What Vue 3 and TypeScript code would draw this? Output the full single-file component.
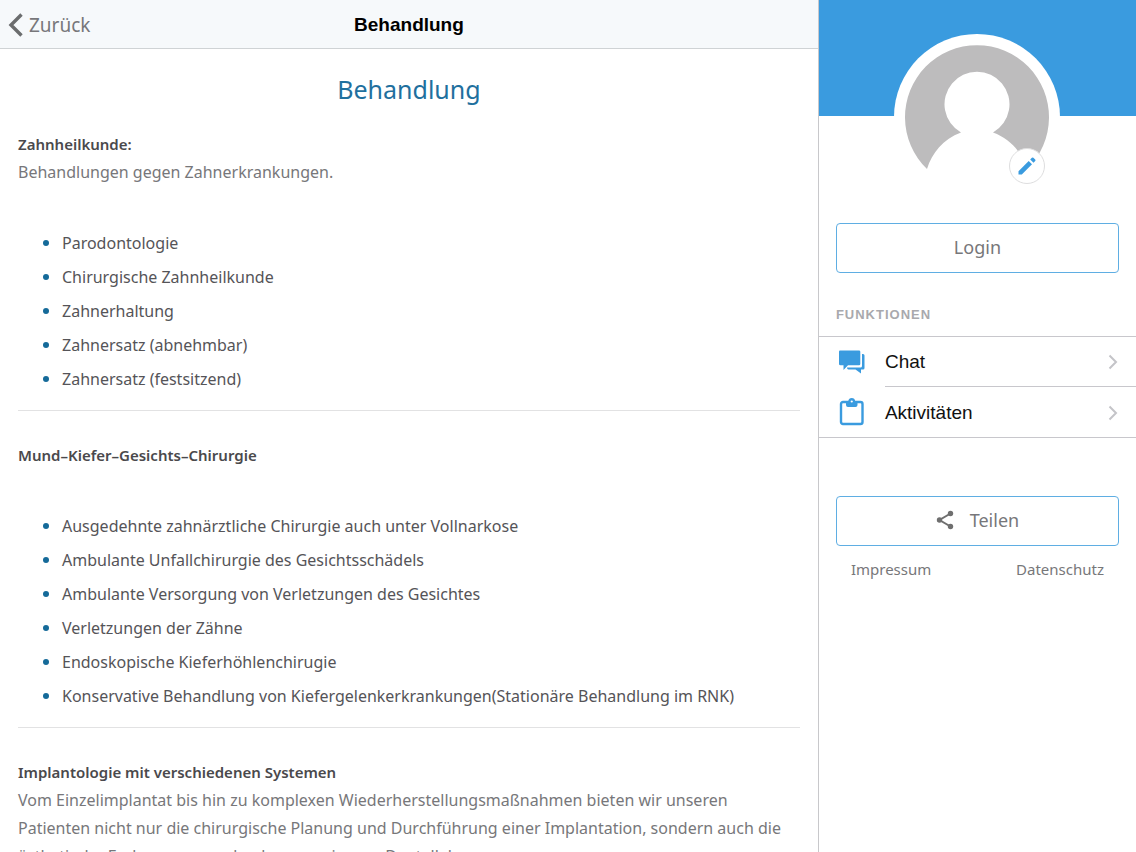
<script setup lang="ts">
interface Section {
  title: string
  text?: string
  items: string[]
}

interface MenuEntry {
  id: 'chat' | 'tasks'
  label: string
}

const sections: Section[] = [
  {
    title: 'Zahnheilkunde:',
    text: 'Behandlungen gegen Zahnerkrankungen.',
    items: [
      'Parodontologie',
      'Chirurgische Zahnheilkunde',
      'Zahnerhaltung',
      'Zahnersatz (abnehmbar)',
      'Zahnersatz (festsitzend)',
    ],
  },
  {
    title: 'Mund–Kiefer–Gesichts–Chirurgie',
    items: [
      'Ausgedehnte zahnärztliche Chirurgie auch unter Vollnarkose',
      'Ambulante Unfallchirurgie des Gesichtsschädels',
      'Ambulante Versorgung von Verletzungen des Gesichtes',
      'Verletzungen der Zähne',
      'Endoskopische Kieferhöhlenchirugie',
      'Konservative Behandlung von Kiefergelenkerkrankungen(Stationäre Behandlung im RNK)',
    ],
  },
  {
    title: 'Implantologie mit verschiedenen Systemen',
    text: 'Vom Einzelimplantat bis hin zu komplexen Wiederherstellungsmaßnahmen bieten wir unseren Patienten nicht nur die chirurgische Planung und Durchführung einer Implantation, sondern auch die ästhetische Endversorgung durch unser eigenes Dentallabor.',
    items: [],
  },
]

const menu: MenuEntry[] = [
  { id: 'chat', label: 'Chat' },
  { id: 'tasks', label: 'Aktivitäten' },
]
</script>

<template>
  <div class="app">
    <main class="content">
      <header class="bar">
        <button class="back" type="button">
          <svg width="16" height="24" viewBox="0 0 16 24" aria-hidden="true">
            <path d="M13.500 1.500 3 12l10.500 10.500" fill="none" stroke="#6b6d6e" stroke-width="3.400" />
          </svg>
          <span>Zurück</span>
        </button>
        <span class="bar-title">Behandlung</span>
      </header>

      <article class="article">
        <h1>Behandlung</h1>
        <section v-for="section in sections" :key="section.title">
          <h2>{{ section.title }}</h2>
          <p v-if="section.text">{{ section.text }}</p>
          <ul v-if="section.items.length">
            <li v-for="item in section.items" :key="item">{{ item }}</li>
          </ul>
        </section>
      </article>
    </main>

    <aside class="side">
      <div class="cover">
        <div class="avatar">
          <svg class="person" viewBox="0 0 144 144" aria-hidden="true">
            <path
              d="M22 124A72 72 0 1 1 122 124C117 108 106 94 88 87.500A32.500 32.500 0 1 0 56 87.500C38 94 27 108 22 124Z"
              fill="#bdbcbd"
            />
          </svg>
          <button class="edit" type="button" aria-label="Profilbild bearbeiten">
            <svg width="24" height="24" viewBox="0 0 24 24" aria-hidden="true">
              <path d="M3.500 17.200V20.500H6.800L17 10.300 13.700 7ZM15.200 5.500 18.500 8.800 20.200 7.100Q20.900 6.400 20.200 5.600L18.400 3.800Q17.600 3.100 16.900 3.800Z" fill="#3a9bdf" />
            </svg>
          </button>
        </div>
      </div>

      <button class="outline login" type="button">Login</button>

      <h3>FUNKTIONEN</h3>
      <nav class="menu">
        <a v-for="entry in menu" :key="entry.id" href="#">
          <svg v-if="entry.id === 'chat'" class="icon" viewBox="0 0 28 28" aria-hidden="true">
            <path d="M2 2.500H21Q22.300 2.500 22.300 3.800V16Q22.300 17.300 21 17.300H10L5.500 22V17.300H2.500Q1 17.300 1 16V3.800Q1 2.500 2 2.500Z" fill="#3a9bdf" />
            <path d="M24 6H25Q26.500 6 26.500 7.500V20Q26.500 21.500 25 21.500H23V25.500L17.500 21.500H10.500Q9 21.500 9 19.500H22.500Q24 19.500 24 18Z" fill="#3a9bdf" />
          </svg>
          <svg v-else class="icon" viewBox="0 0 28 28" aria-hidden="true">
            <rect x="3" y="4" width="21.500" height="22" rx="2" fill="none" stroke="#3a9bdf" stroke-width="2.400" />
            <path d="M8 3H10.300A3.500 3.500 0 0 1 17.200 3H19.500V7Q19.500 9 17.500 9H10Q8 9 8 7Z" fill="#3a9bdf" />
            <circle cx="13.750" cy="3.500" r="1.100" fill="#fff" />
          </svg>
          <span class="label">
            {{ entry.label }}
            <svg width="10" height="16" viewBox="0 0 10 16" aria-hidden="true">
              <path d="M1.500 1.500 8 8l-6.500 6.500" fill="none" stroke="#c4c4c8" stroke-width="2" />
            </svg>
          </span>
        </a>
      </nav>

      <button class="outline share" type="button">
        <svg width="18" height="20" viewBox="0 0 18 20" aria-hidden="true">
          <path d="M14.500 3.500 3.500 10 14.500 16.500" fill="none" stroke="#6f6f6f" stroke-width="2" />
          <circle cx="14.500" cy="3.500" r="2.700" fill="#6f6f6f" />
          <circle cx="3.500" cy="10" r="2.700" fill="#6f6f6f" />
          <circle cx="14.500" cy="16.500" r="2.700" fill="#6f6f6f" />
        </svg>
        Teilen
      </button>
      <footer class="legal">
        <a href="#">Impressum</a>
        <a href="#">Datenschutz</a>
      </footer>
    </aside>
  </div>
</template>

<style>
body {
  margin: 0;
  background: #fff;
}
</style>

<style scoped>
.app {
  display: grid;
  grid-template-columns: 18fr 7fr;
  height: 100vh;
  background: #fff;
  color: #77777a;
  font-family: "Noto Sans", "Open Sans", sans-serif;
}

button {
  margin: 0;
  padding: 0;
  font: inherit;
  color: inherit;
  cursor: pointer;
}

a {
  color: inherit;
  text-decoration: none;
}

svg {
  display: block;
  flex: none;
}

.content {
  display: flex;
  flex-direction: column;
  min-width: 0;
  min-height: 0;
}

.bar {
  display: grid;
  flex: none;
  grid-template-columns: 1fr auto 1fr;
  align-items: center;
  box-sizing: border-box;
  height: 49px;
  padding: 2px 8px 0;
  border-bottom: 1px solid #cfd3d5;
  background: #f6f9fb;
}

.back {
  display: flex;
  align-items: center;
  justify-self: start;
  gap: 5px;
  border: 0;
  background: none;
  font-size: 19px;
  line-height: 24px;
}

.bar-title {
  color: #000;
  font: bold 19px "Liberation Sans", Arial, sans-serif;
}

.article {
  flex: 1;
  min-height: 0;
  padding: 0 18px;
  overflow-y: auto;
  scrollbar-width: none;
  font-size: 16px;
  line-height: 28px;
}

h1 {
  margin: 22px 0 23px;
  color: #1f709e;
  font-size: 25px;
  font-weight: 400;
  line-height: 36px;
  text-align: center;
}

h2 {
  margin: 0;
  color: #4a494c;
  font-size: 15px;
  font-weight: 600;
  line-height: 28px;
}

p {
  margin: 0;
}

ul {
  margin: 0 0 30px;
  padding: 40px 0 14px 44px;
  border-bottom: 1px solid #e2e2e3;
  list-style: none;
  color: #555458;
}

li {
  display: flex;
  align-items: center;
  padding: 3px 0;
}

li::before {
  content: "";
  flex: none;
  width: 6px;
  height: 6px;
  margin: 0 13px 0 -19px;
  border-radius: 50%;
  background: #156a99;
}

.side {
  display: flex;
  flex-direction: column;
  min-height: 0;
  border-left: 1px solid #c8c8cb;
}

.cover {
  display: flex;
  justify-content: center;
  height: 116px;
  margin-bottom: 107px;
  background: #3a9bdf;
}

.avatar {
  position: relative;
  box-sizing: border-box;
  width: 166px;
  height: 166px;
  margin-top: 34px;
  padding: 11px;
  border-radius: 50%;
  background: #fff;
}

.person {
  width: 144px;
  height: 144px;
}

.edit {
  position: absolute;
  right: 15px;
  bottom: 16px;
  display: grid;
  place-items: center;
  width: 36px;
  height: 36px;
  border: 1px solid #dededf;
  border-radius: 50%;
  background: #fff;
}

.outline {
  display: flex;
  align-items: center;
  justify-content: center;
  gap: 16px;
  height: 50px;
  margin: 0 17px;
  padding-bottom: 2px;
  border: 1px solid #5faee3;
  border-radius: 4px;
  background: #fff;
  font-size: 18px;
}

h3 {
  margin: 32px 17px 11px;
  color: #a9a9ad;
  font: bold 13px/20px "Liberation Sans", Arial, sans-serif;
  letter-spacing: 1px;
}

.menu {
  margin-bottom: 58px;
  border-top: 1px solid #c8c7cc;
  border-bottom: 1px solid #c8c7cc;
  color: #111;
  font: 19px "Liberation Sans", Arial, sans-serif;
}

.menu a {
  display: flex;
  padding-left: 19px;
}

.icon {
  width: 28px;
  height: 28px;
  margin: 11px 19px 0 0;
}

.label {
  display: flex;
  flex: 1;
  align-items: center;
  justify-content: space-between;
  height: 50px;
  padding-top: 1px;
  padding-right: 18px;
  box-sizing: border-box;
}

.menu a:first-child .label {
  border-bottom: 1px solid #c8c7cc;
}

.legal {
  display: flex;
  justify-content: space-between;
  padding: 13px 32px 0;
  font-size: 15px;
  line-height: 20px;
}
</style>
